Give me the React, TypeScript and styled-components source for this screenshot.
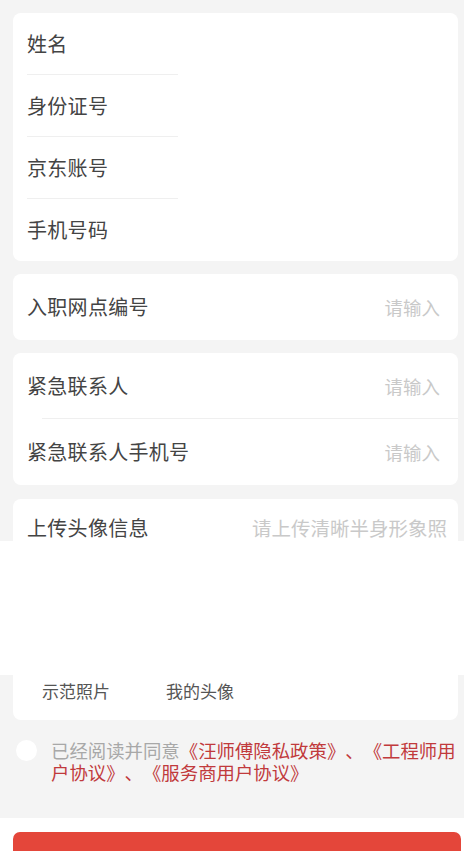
import React from 'react';
import styled, { createGlobalStyle } from 'styled-components';

const GlobalStyle = createGlobalStyle`
  html, body {
    margin: 0;
    padding: 0;
    background: #f4f4f4;
    font-family: "Noto Sans CJK SC", "Noto Sans", sans-serif;
    text-spacing-trim: space-all;
  }
  * { box-sizing: border-box; }
`;

export default function App() {
  return (
    <>
      <GlobalStyle />
      <Page>
        <Form>
          <Card>
            <Row>
              <Label>姓名</Label>
              <ShortLine />
            </Row>
            <Row>
              <Label>身份证号</Label>
              <ShortLine />
            </Row>
            <Row>
              <Label>京东账号</Label>
              <ShortLine />
            </Row>
            <Row>
              <Label>手机号码</Label>
            </Row>
          </Card>

          <Card>
            <Row $tall>
              <Label>入职网点编号</Label>
              <Placeholder>请输入</Placeholder>
            </Row>
          </Card>

          <Card>
            <Row $tall>
              <Label>紧急联系人</Label>
              <Placeholder>请输入</Placeholder>
              <WideLine />
            </Row>
            <Row $tall>
              <Label>紧急联系人手机号</Label>
              <Placeholder>请输入</Placeholder>
            </Row>
          </Card>
        </Form>

        <Upload>
          <UploadHead>
            <Label>上传头像信息</Label>
            <Placeholder $wide>请上传清晰半身形象照</Placeholder>
          </UploadHead>
          <PhotoArea />
          <UploadFoot>
            <Caption>示范照片</Caption>
            <Caption>我的头像</Caption>
          </UploadFoot>
        </Upload>

        <Agreement>
          <Radio />
          <AgreeText>
            已经阅读并同意<Link>《汪师傅隐私政策》、《工程师用户协议》、《服务商用户协议》</Link>
          </AgreeText>
        </Agreement>

        <Footer>
          <SubmitButton>提交申请</SubmitButton>
        </Footer>
      </Page>
    </>
  );
}

const Page = styled.div`
  display: flex;
  flex-direction: column;
  min-height: 851px;
`;

const Form = styled.div`
  display: flex;
  flex-direction: column;
  gap: 13px;
  padding: 13px 6px 0 13px;
`;

const Card = styled.div`
  background: #fff;
  border-radius: 8px;
  display: flex;
  flex-direction: column;
`;

const Row = styled.div<{ $tall?: boolean }>`
  position: relative;
  height: ${(p) => (p.$tall ? '66px' : '62px')};
  display: flex;
  align-items: center;
  justify-content: space-between;
  padding: 0 18px 0 14px;
`;

const ShortLine = styled.div`
  position: absolute;
  left: 14px;
  bottom: 0;
  width: 151px;
  height: 1px;
  background: #efefef;
`;

const WideLine = styled.div`
  position: absolute;
  left: 29px;
  right: 0;
  bottom: 0;
  height: 1px;
  background: #efefef;
`;

const Label = styled.span`
  font-size: 20px;
  color: #444;
  line-height: 24px;
  letter-spacing: 0.3px;
`;

const Placeholder = styled.span<{ $wide?: boolean }>`
  font-size: ${(p) => (p.$wide ? '19.5px' : '18.5px')};
  color: #c9c9c9;
  line-height: 24px;
`;

const Upload = styled.div`
  margin-top: 14px;
  display: flex;
  flex-direction: column;
`;

const UploadHead = styled.div`
  margin: 0 6px 0 13px;
  height: 42px;
  background: #fff;
  border-radius: 8px 8px 0 0;
  display: flex;
  justify-content: space-between;
  align-items: flex-start;
  padding: 17px 11px 0 14px;
`;

const PhotoArea = styled.div`
  height: 134px;
  background: #fff;
`;

const UploadFoot = styled.div`
  margin: 0 6px 0 13px;
  height: 45px;
  background: #fff;
  border-radius: 0 0 8px 8px;
  display: flex;
  gap: 56px;
  padding: 4px 0 0 29px;
`;

const Caption = styled.span`
  font-size: 17px;
  line-height: 24px;
  color: #555;
`;

const Agreement = styled.div`
  display: flex;
  align-items: flex-start;
  gap: 14px;
  padding: 19px 6px 0 16px;
  height: 98px;
`;

const Radio = styled.div`
  flex: none;
  width: 21px;
  height: 21px;
  margin-top: 1px;
  border-radius: 50%;
  background: #fff;
`;

const AgreeText = styled.p`
  margin: 0;
  font-size: 18.4px;
  line-height: 22px;
  color: #a8a8a8;
  text-spacing-trim: space-all;
`;

const Link = styled.span`
  color: #c13a3c;
`;

const Footer = styled.div`
  flex: 1;
  background: #fff;
  padding: 14px 3px 0 13px;
`;

const SubmitButton = styled.button`
  width: 100%;
  height: 52px;
  border: none;
  border-radius: 7px;
  background: #e4463a;
  color: #fff;
  font-family: inherit;
  font-size: 18px;
  padding-top: 10px;
`;
